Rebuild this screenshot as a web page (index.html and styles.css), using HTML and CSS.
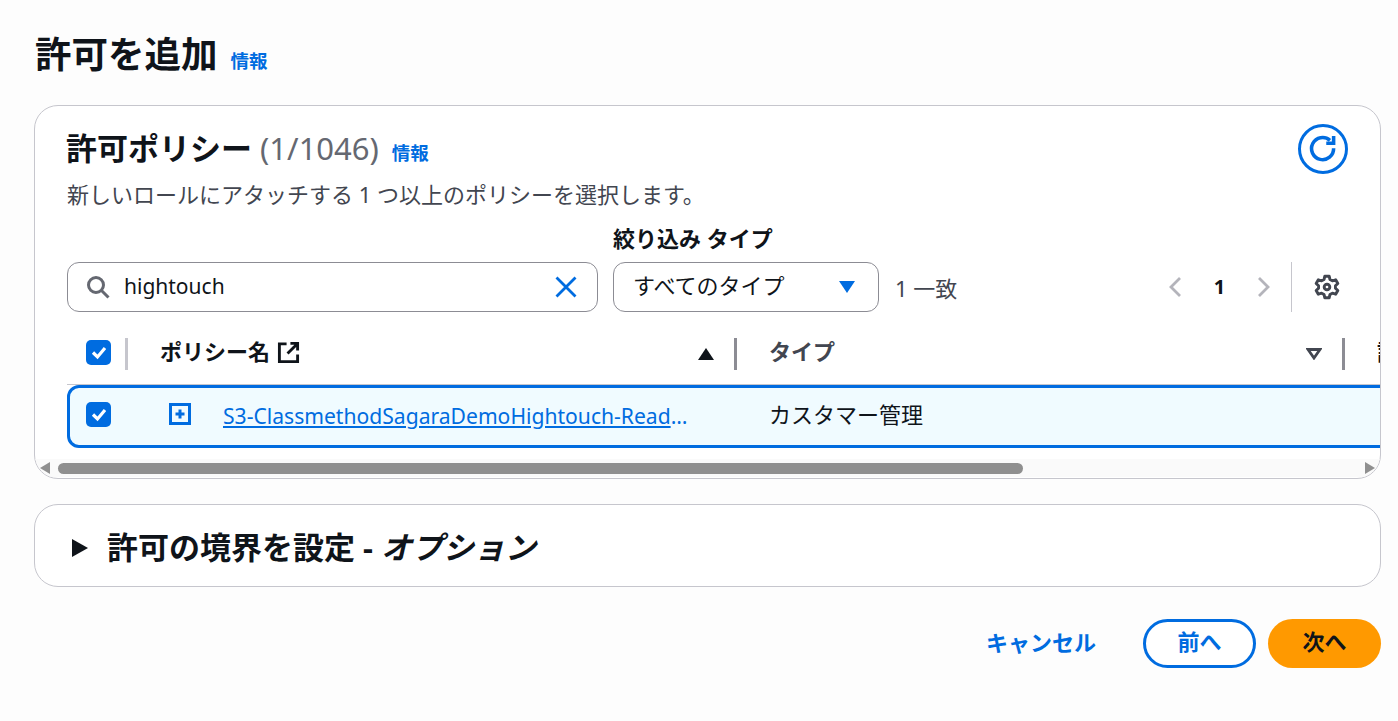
FILE: index.html
```html
<!DOCTYPE html>
<html lang="ja">
<head>
<meta charset="utf-8">
<title>許可を追加</title>
<link rel="stylesheet" href="styles.css">
</head>
<body>
<main class="page">
  <header class="page-head">
    <h1 class="page-title">許可を追加</h1>
    <a class="info" href="#">情報</a>
  </header>

  <section class="card policies">
    <div class="card-top">
      <div class="card-head">
        <div class="title-row">
          <h2 class="card-title">許可ポリシー <span class="count">(1/1046)</span></h2>
          <a class="info" href="#">情報</a>
        </div>
        <p class="desc">新しいロールにアタッチする 1 つ以上のポリシーを選択します。</p>
      </div>
      <button class="refresh" aria-label="更新">
        <svg viewBox="0 0 24 24" width="34" height="34" fill="none" stroke="#006ce0" stroke-width="2.500"><path d="M19.500 11.500a7.800 7.800 0 1 1-2.600-5.600"/><path d="M19.500 2.800v5.200h-5.200" stroke-linejoin="miter"/></svg>
      </button>
    </div>

    <div class="filters">
      <div class="search">
        <svg class="search-icon" viewBox="0 0 24 24" width="24" height="24" fill="none" stroke="#656871" stroke-width="3"><circle cx="10" cy="10" r="7.500"/><path d="M15.500 15.500l7 7"/></svg>
        <span class="search-text">hightouch</span>
        <svg viewBox="0 0 24 24" width="24" height="24" fill="none" stroke="#006ce0" stroke-width="2.800"><path d="M2.500 2.500l19 19M21.500 2.500l-19 19"/></svg>
      </div>
      <div class="type-filter">
        <label class="filter-label">絞り込み タイプ</label>
        <div class="select">
          <span class="select-text">すべてのタイプ</span>
          <svg viewBox="0 0 16 12" width="16" height="12"><path d="M0 0h16L8 12z" fill="#006ce0"/></svg>
        </div>
      </div>
      <span class="matches">1 一致</span>
      <nav class="pager">
        <svg viewBox="0 0 14 22" width="14" height="22" fill="none" stroke="#b4b4bb" stroke-width="2.800"><path d="M12 2L3 11l9 9"/></svg>
        <span class="page-num">1</span>
        <svg viewBox="0 0 14 22" width="14" height="22" fill="none" stroke="#b4b4bb" stroke-width="2.800"><path d="M2 2l9 9-9 9"/></svg>
      </nav>
      <div class="settings">
        <svg viewBox="0 0 24 24" width="26" height="26" fill="none" stroke="#424650" stroke-width="2.700" stroke-linejoin="round"><circle cx="12" cy="12" r="2.600"/><path d="M10 2h4l.7 3 2.300 1.300 3-.9 2 3.400-2.200 2.100v2.200l2.200 2.100-2 3.400-3-.9L14.700 19l-.7 3h-4l-.7-3L7 17.700l-3 .9-2-3.400 2.200-2.100v-2.200L2 8.800l2-3.400 3 .9L9.300 5z"/></svg>
      </div>
    </div>

    <div class="table">
      <div class="row head-row">
        <div class="cell check-cell"><span class="checkbox"><svg viewBox="0 0 24 24" width="24" height="24" fill="none" stroke="#fff" stroke-width="3.200"><path d="M6 12.500l4.500 4.500L18 8"/></svg></span></div>
        <div class="cell name-cell">
          <span class="th-label">ポリシー名</span>
          <svg class="ext" viewBox="0 0 24 24" width="23" height="23" fill="none" stroke="#0f141a" stroke-width="3"><path d="M10 3H2.500v18.500h19V14"/><path d="M21.500 10V2.500H14M21.500 2.500L11 13"/></svg>
          <svg class="sort" viewBox="0 0 16 12" width="16" height="12"><path d="M8 0l8 12H0z" fill="#0f141a"/></svg>
        </div>
        <div class="cell type-cell">
          <span class="th-label muted">タイプ</span>
          <svg class="sort" viewBox="0 0 16 12" width="16" height="12" fill="none" stroke="#424650" stroke-width="2.800"><path d="M2 1.500h12L8 10z"/></svg>
        </div>
        <div class="cell desc-cell"><span class="th-label">説明</span></div>
      </div>
      <div class="row body-row">
        <div class="cell check-cell"><span class="checkbox"><svg viewBox="0 0 24 24" width="24" height="24" fill="none" stroke="#fff" stroke-width="3.200"><path d="M6 12.500l4.500 4.500L18 8"/></svg></span></div>
        <div class="cell name-cell">
          <svg class="policy-icon" viewBox="0 0 24 24" width="24" height="24" fill="none" stroke="#006ce0" stroke-width="3"><path d="M2.500 2.500h19v19h-19z"/><path d="M12 7.500v9M7.500 12h9"/></svg>
          <a class="policy-link" href="#">S3-ClassmethodSagaraDemoHightouch-ReadWriteAccessPolicy</a>
        </div>
        <div class="cell type-cell"><span class="type-text">カスタマー管理</span></div>
        <div class="cell desc-cell"><span>Custom policy</span></div>
      </div>
    </div>

    <div class="scrollbar">
      <svg viewBox="0 0 10 12" width="10" height="12"><path d="M10 0v12L0 6z" fill="#8f8f8f"/></svg>
      <div class="scroll-track"><div class="scroll-thumb"></div></div>
      <svg viewBox="0 0 10 12" width="10" height="12"><path d="M0 0v12l10-6z" fill="#8f8f8f"/></svg>
    </div>
  </section>

  <section class="card boundary">
    <svg viewBox="0 0 16 18" width="16" height="18"><path d="M0 0l16 9L0 18z" fill="#0f141a"/></svg>
    <h2 class="boundary-title">許可の境界を設定 - <i>オプション</i></h2>
  </section>

  <footer class="actions">
    <a class="cancel" href="#">キャンセル</a>
    <button class="btn btn-secondary">前へ</button>
    <button class="btn btn-primary">次へ</button>
  </footer>
</main>
</body>
</html>
```

FILE: styles.css
```css
* { box-sizing: border-box; }
html, body { margin: 0; padding: 0; height: 100%; overflow: hidden; }
body {
  background: #fdfdfd;
  color: #0f141a;
  font-family: "Noto Sans", "Noto Sans CJK JP", sans-serif;
  font-size: 22px;
}
a { text-decoration: none; }
h1, h2, p { margin: 0; }

.page { padding: 27px 17px 0 34px; }

.page-head { display: flex; align-items: baseline; gap: 13px; height: 78px; padding-left: 1px; }
.page-title { font-size: 36.5px; line-height: 54px; font-weight: 700; }
.info { color: #006ce0; font-size: 18.5px; font-weight: 700; line-height: 26px; }

.card {
  background: #fff;
  border: 1px solid #c6c6cd;
  border-radius: 24px;
  overflow: hidden;
}

.policies { height: 374px; }

.card-top { display: flex; justify-content: space-between; padding: 18px 32px 0 31px; height: 106px; }
.title-row { display: flex; align-items: baseline; gap: 13px; height: 48px; }
.card-title { font-size: 31px; line-height: 49px; font-weight: 700; }
.count { color: #656871; font-weight: 400; }
.desc { color: #424650; font-size: 22px; line-height: 30px; margin-top: 7px; padding-left: 1px; }
.refresh {
  width: 50px; height: 50px; padding: 0;
  margin-right: 0;
  background: #fff;
  border: 3px solid #006ce0;
  border-radius: 50%;
  display: flex; align-items: center; justify-content: center;
}

.filters { display: flex; align-items: flex-end; padding-left: 32px; height: 100px; margin-top: 0; }
.search {
  width: 531px; height: 50px;
  border: 1px solid #8c8c94;
  border-radius: 12px;
  display: flex; align-items: center;
  padding: 0 19px 0 18px;
  gap: 14px;
}
.search-text { flex: 1; font-size: 21px; padding-bottom: 2px; }
.type-filter { margin-left: 15px; width: 266px; }
.filter-label { display: block; font-weight: 700; font-size: 22px; line-height: 30px; margin-bottom: 9px; }
.select {
  height: 50px;
  border: 1px solid #8c8c94;
  border-radius: 12px;
  display: flex; align-items: center; justify-content: space-between;
  padding: 0 23px 0 19px;
  color: #0f141a;
}
.select-text { padding-bottom: 6px; }
.matches { width: 272px; margin-left: 16px; height: 50px; line-height: 53px; color: #424650; white-space: nowrap; }
.pager { display: flex; align-items: center; gap: 0; height: 50px; width: 129px; justify-content: space-between; padding-right: 26px; margin-left: 1px; }
.page-num { font-weight: 700; font-size: 20px; padding-bottom: 2px; }
.settings { height: 50px; border-left: 1px solid #c6c6cd; width: 50px; display: flex; align-items: center; justify-content: flex-end; margin-left: -6px; padding: 0 1px 1px 0; }

.table { margin: 18px 0 0 32px; width: 1500px; }
.row { display: grid; grid-template-columns: 61px 609px 608px 200px; }
.head-row { height: 55px; padding-bottom: 10px; align-items: center; border-bottom: 1px solid #c6c6cd; }
.body-row {
  height: 63px;
  padding-bottom: 5px;
  align-items: center;
  background: #f0fbff;
  border: 3px solid #006ce0;
  border-radius: 12px;
}
.cell { display: flex; align-items: center; height: 100%; }
.check-cell { padding-left: 19px; }
.head-row .check-cell, .head-row .name-cell, .head-row .type-cell { position: relative; }
.head-row .cell:not(.desc-cell)::after {
  content: ""; position: absolute; right: 0; top: 8px; height: 32px; width: 3px; background: #8c8c94;
}
.head-row .check-cell::after { background: #c6c6cd !important; }
.checkbox {
  width: 25px; height: 25px;
  background: #006ce0;
  border-radius: 5px;
  display: flex; align-items: center; justify-content: center;
}
.name-cell { padding-left: 32px; }
.th-label { font-weight: 700; font-size: 22px; white-space: nowrap; padding-bottom: 4px; }
.muted { color: #424650; }
.ext { margin-left: 7px; }
.sort { position: absolute; right: 23px; top: 18px; }
.type-cell { padding-left: 32px; }
.desc-cell { padding-left: 32px; white-space: nowrap; }
.body-row .name-cell { padding-left: 37px; }
.body-row .check-cell { padding-left: 16px; }
.body-row .type-cell { padding-left: 29px; }
.type-text { padding-bottom: 2px; }
.policy-link {
  margin: 2px 0 0 31px;
  width: 471px;
  overflow: hidden;
  text-overflow: ellipsis;
  white-space: nowrap;
  color: #006ce0;
  text-decoration: underline;
  font-size: 21.1px;
}

.scrollbar { display: flex; align-items: center; height: 18px; margin-top: 11px; background: #fafafa; padding: 0 5px; gap: 8px; }
.scroll-track { flex: 1; height: 11px; }
.scroll-thumb { width: 965px; height: 11px; background: #8f8f8f; border-radius: 6px; }

.boundary {
  height: 83px;
  margin-top: 25px;
  display: flex; align-items: center;
  padding: 5px 0 0 37px;
  gap: 19px;
}
.boundary-title { font-size: 31px; font-weight: 700; line-height: 44px; padding-bottom: 2px; }

.actions { display: flex; align-items: center; justify-content: flex-end; margin-top: 32px; }
.cancel { color: #006ce0; font-weight: 700; font-size: 22px; margin: 0 47px 6px 0; }
.btn {
  width: 113px; height: 49px;
  border-radius: 25px;
  font-family: inherit;
  font-size: 22px;
  font-weight: 700;
  padding: 0 0 8px;
}
.btn-secondary { background: #fff; border: 3px solid #006ce0; color: #006ce0; margin-right: 12px; }
.btn-primary { background: #ff9900; border: 0; color: #0f141a; }
```
